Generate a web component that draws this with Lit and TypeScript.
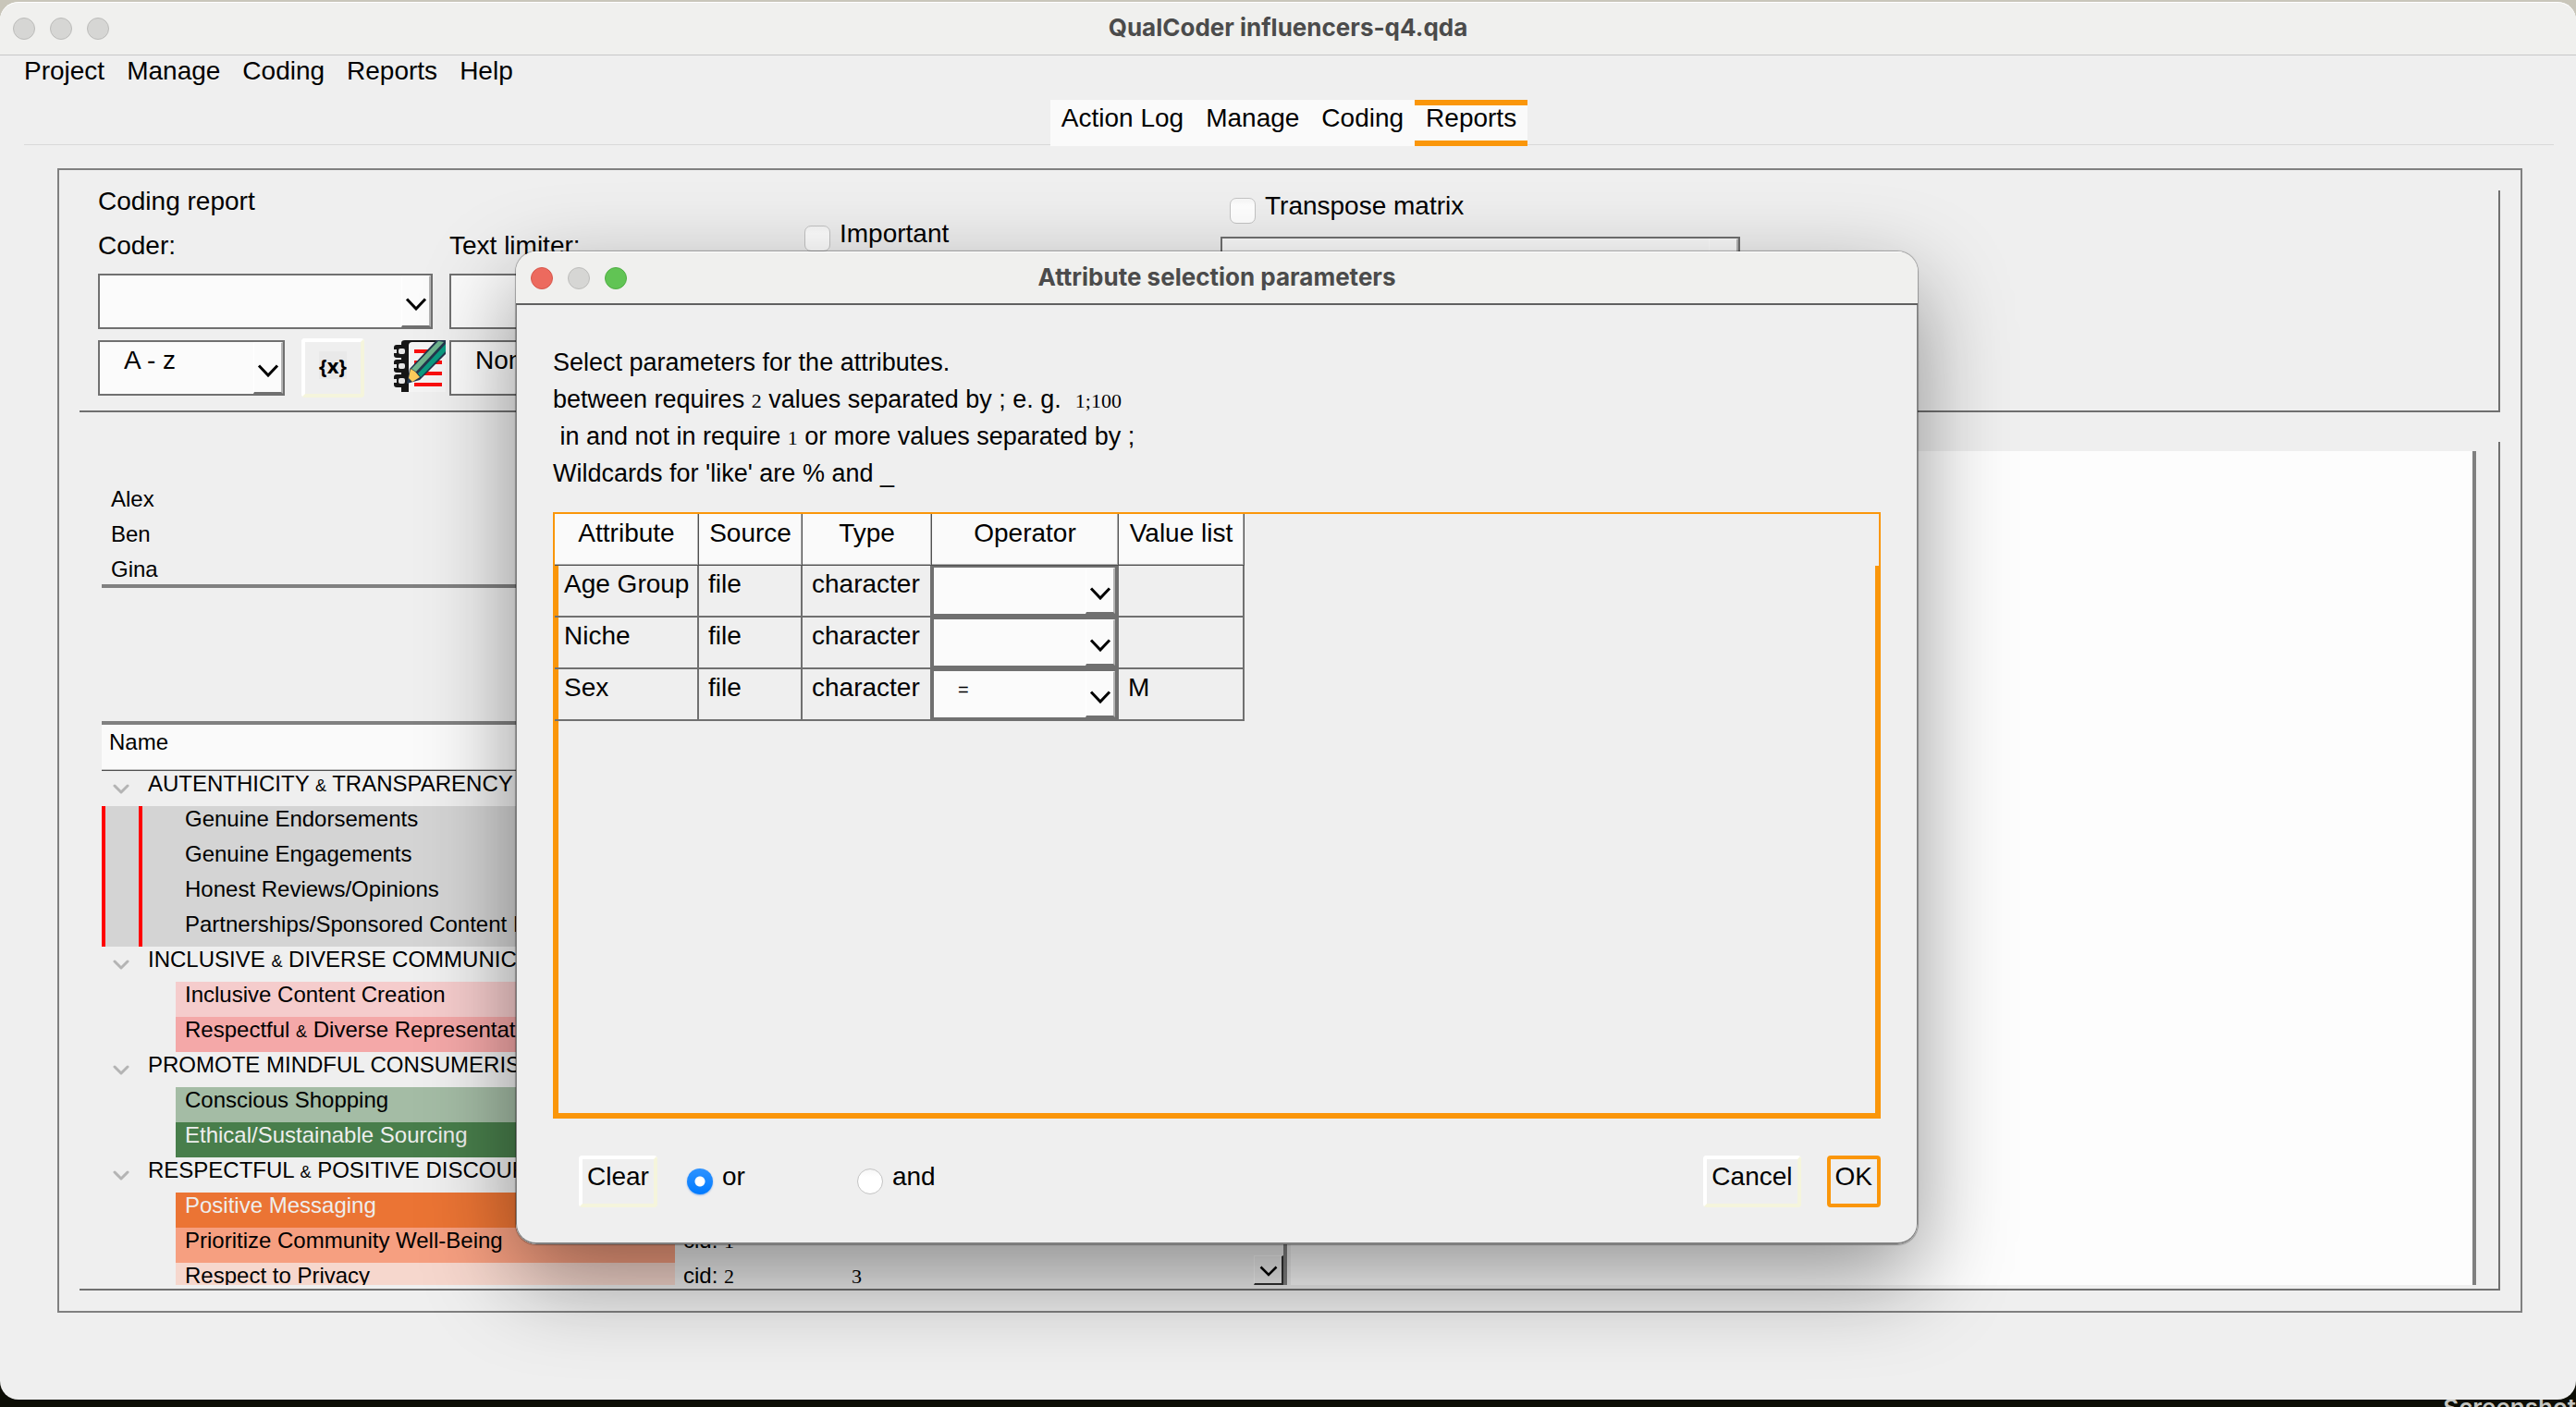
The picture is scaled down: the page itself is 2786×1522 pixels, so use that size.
import { LitElement, html, css, svg, nothing } from "lit";
import { customElement, property } from "lit/decorators.js";
import { classMap } from "lit/directives/class-map.js";

type Part = string | { n: string } | { s: string };

interface CodeRow {
  parts: Part[];
  kind: "category" | "code";
  tone?: string;
  id?: string;
  count?: string;
}

const codeRows: CodeRow[] = [
  { kind: "category", parts: ["AUTENTHICITY ", { s: "&" }, " TRANSPARENCY"] },
  { kind: "code", tone: "marked", parts: ["Genuine Endorsements"] },
  { kind: "code", tone: "marked", parts: ["Genuine Engagements"] },
  { kind: "code", tone: "marked", parts: ["Honest Reviews/Opinions"] },
  { kind: "code", tone: "marked", parts: ["Partnerships/Sponsored Content Disclosure"] },
  { kind: "category", parts: ["INCLUSIVE ", { s: "&" }, " DIVERSE COMMUNICATION"] },
  { kind: "code", tone: "pink-light", parts: ["Inclusive Content Creation"] },
  { kind: "code", tone: "pink", parts: ["Respectful ", { s: "&" }, " Diverse Representation"] },
  { kind: "category", parts: ["PROMOTE MINDFUL CONSUMERISM"] },
  { kind: "code", tone: "green-light", parts: ["Conscious Shopping"] },
  { kind: "code", tone: "green", parts: ["Ethical/Sustainable Sourcing"] },
  { kind: "category", parts: ["RESPECTFUL ", { s: "&" }, " POSITIVE DISCOURSE"] },
  { kind: "code", tone: "orange", parts: ["Positive Messaging"] },
  { kind: "code", tone: "orange-mid", parts: ["Prioritize Community Well-Being"], id: "1" },
  { kind: "code", tone: "orange-light", parts: ["Respect to Privacy"], id: "2", count: "3" },
];

const attributes = [
  { name: "Age Group", source: "file", type: "character", operator: "", value: "" },
  { name: "Niche", source: "file", type: "character", operator: "", value: "" },
  { name: "Sex", source: "file", type: "character", operator: "=", value: "M" },
];

const helpLines: Part[][] = [
  ["Select parameters for the attributes."],
  ["between requires ", { n: "2" }, " values separated by ; e. g.  ", { n: "1;100" }],
  [" in and not in require ", { n: "1" }, " or more values separated by ;"],
  ["Wildcards for 'like' are % and _"],
];

const renderParts = (parts: Part[]) =>
  parts.map((p) =>
    typeof p === "string"
      ? p
      : "n" in p
        ? html`<span class="num">${p.n}</span>`
        : html`<span class="amp">${p.s}</span>`
  );

const sharedText = css`
  *,
  *::before,
  *::after {
    box-sizing: border-box;
  }
  .num {
    font-family: "Liberation Serif", serif;
    font-size: 22px;
    line-height: 1;
  }
  .amp {
    font-size: 18px;
    line-height: 1;
  }
  input,
  button,
  select {
    font: inherit;
    color: inherit;
    margin: 0;
  }
`;

const titleStyles = css`
  h1 {
    margin: 0;
    padding-bottom: 2px;
    font: 700 26px/32px Inter, sans-serif;
    color: #4b4b4b;
  }
`;

const choiceStyles = css`
  .choice {
    display: flex;
    align-items: flex-start;
    gap: 10px;
    line-height: 32px;
  }
  .choice input {
    appearance: none;
    flex: none;
    width: 28px;
    height: 28px;
    margin-top: 7px;
    border: 1px solid #c4c4c4;
    border-radius: 7px;
    background: linear-gradient(#f6f6f6, #ffffff 30%);
  }
  .choice input[type="radio"] {
    border-radius: 50%;
  }
  .choice input[type="radio"]:checked {
    border: none;
    background: radial-gradient(circle, #ffffff 0 5px, transparent 6px), linear-gradient(#2e93ff, #007aff);
    box-shadow: 0 1px 2px rgba(0, 90, 220, 0.4);
  }
`;

@customElement("window-lights")
class WindowLights extends LitElement {
  @property({ type: Boolean }) active = false;

  static styles = css`
    :host {
      display: flex;
      gap: 16px;
    }
    .light {
      box-sizing: border-box;
      width: 24px;
      height: 24px;
      border-radius: 50%;
      border: 1px solid #bcbcba;
      background: #d6d6d4;
    }
    .close {
      background: #ec6a5e;
      border-color: #d6574c;
    }
    .zoom {
      background: #61c454;
      border-color: #50ad44;
    }
  `;

  render() {
    return html`
      <span class=${classMap({ light: true, close: this.active })}></span>
      <span class="light"></span>
      <span class=${classMap({ light: true, zoom: this.active })}></span>
    `;
  }
}

@customElement("combo-box")
class ComboBox extends LitElement {
  @property() label = "";
  @property() value = "";
  @property({ type: Boolean }) small = false;

  static styles = [
    sharedText,
    css`
      :host {
        display: block;
        height: 60px;
      }
      .combo {
        display: grid;
        grid-template-columns: 1fr 34px;
        height: 100%;
      }
      select {
        grid-area: 1 / 1 / 2 / 3;
        appearance: none;
        width: 100%;
        height: 100%;
        padding: 4px 34px 20px 26px;
        border: 2px solid #707070;
        border-radius: 0;
        background: #fbfbfb;
        line-height: 32px;
      }
      .small select {
        font-size: 20px;
        padding: 0 34px 10px 26px;
      }
      .arrow {
        grid-area: 1 / 2;
        pointer-events: none;
        margin: 2px 2px 2px 0;
        border-top: 1px solid #ffffff;
        border-left: 1px solid #ffffff;
        border-right: 2px solid #b4b4b4;
        border-bottom: 2px solid #707070;
        display: flex;
        align-items: center;
        justify-content: center;
        padding-top: 6px;
      }
      .arrow svg {
        width: 24px;
        height: 14px;
        flex: none;
      }
    `,
  ];

  render() {
    return html`
      <div class=${classMap({ combo: true, small: this.small })}>
        <select aria-label=${this.label}>
          <option>${this.value}</option>
        </select>
        <span class="arrow">
          <svg viewBox="0 0 24 14">
            <path d="M2 1.5 L12 12 L22 1.5" fill="none" stroke="#000" stroke-width="3" />
          </svg>
        </span>
      </div>
    `;
  }
}

@customElement("attribute-dialog")
class AttributeDialog extends LitElement {
  static styles = [
    sharedText,
    titleStyles,
    choiceStyles,
    css`
      :host {
        display: block;
        border-radius: 22px;
        background: #efefef;
        box-shadow: 0 0 1px 1px rgba(0, 0, 0, 0.3), 0 36px 100px rgba(0, 0, 0, 0.42);
        font-size: 28px;
        overflow: hidden;
      }
      .titlebar {
        display: grid;
        grid-template-columns: 1fr auto 1fr;
        align-items: center;
        height: 58px;
        padding: 0 16px;
        background: #f0f0ee;
        border-top: 1px solid #ffffff;
        border-bottom: 2px solid #606060;
      }
      .body {
        padding: 42px 39px 38px;
        border: 1px solid #808080;
        border-top: none;
        border-bottom: 2px solid #808080;
        border-radius: 0 0 22px 22px;
      }
      .help {
        margin-bottom: 22px;
        font-size: 27px;
        line-height: 40px;
      }
      .help p {
        margin: 0;
        height: 40px;
        white-space: pre;
      }
      .frame {
        position: relative;
        min-height: 656px;
        border: 2px solid #fa960a;
        border-bottom-width: 6px;
      }
      .frame::before,
      .frame::after {
        content: "";
        position: absolute;
        top: 56px;
        bottom: 0;
        width: 4px;
        background: #fa960a;
      }
      .frame::before {
        left: 0;
      }
      .frame::after {
        right: 0;
      }
      table {
        position: relative;
        z-index: 1;
        table-layout: fixed;
        width: 746px;
        border-collapse: separate;
        border-spacing: 0;
      }
      .c-attr {
        width: 156px;
      }
      .c-source {
        width: 112px;
      }
      .c-type {
        width: 140px;
      }
      .c-op {
        width: 202px;
      }
      .c-value {
        width: 136px;
      }
      th,
      td {
        height: 56px;
        vertical-align: top;
        line-height: 32px;
        font-weight: 400;
      }
      th {
        padding: 5px 0 0;
        text-align: center;
        background: #fafafa;
        border-right: 1px solid #505050;
        border-bottom: 1px solid #505050;
        box-shadow: inset -1px -1px #b0b0b0;
      }
      td {
        padding: 4px 0 0 10px;
        border-right: 2px solid #707070;
        border-bottom: 2px solid #707070;
      }
      td.op {
        padding: 0;
      }
      td.op combo-box {
        height: 54px;
      }
      .actions {
        display: flex;
        align-items: flex-start;
        gap: 28px;
        margin: 40px 0 0 28px;
      }
      .choices {
        display: flex;
        flex: 1;
        gap: 0;
        margin: 7px 0 0 4px;
      }
      .choices .choice {
        flex: 0 0 184px;
      }
      button {
        height: 56px;
        padding: 3px 5px 13px;
        line-height: 32px;
        border: 4px solid;
        border-color: #ffffff #f5f5dc #f5f5dc #ffffff;
        border-radius: 4px;
        background: #efefef;
      }
      button.default {
        border-color: #fa960a;
      }
    `,
  ];

  render() {
    return html`
      <div class="titlebar">
        <window-lights active></window-lights>
        <h1>Attribute selection parameters</h1>
      </div>
      <div class="body">
        <div class="help">${helpLines.map((line) => html`<p>${renderParts(line)}</p>`)}</div>
        <div class="frame">
          <table>
            <colgroup>
              <col class="c-attr" /><col class="c-source" /><col class="c-type" /><col class="c-op" /><col
                class="c-value"
              />
            </colgroup>
            <thead>
              <tr>
                <th>Attribute</th>
                <th>Source</th>
                <th>Type</th>
                <th>Operator</th>
                <th>Value list</th>
              </tr>
            </thead>
            <tbody>
              ${attributes.map(
                (a) => html`<tr>
                  <td>${a.name}</td>
                  <td>${a.source}</td>
                  <td>${a.type}</td>
                  <td class="op"><combo-box small label="Operator" value=${a.operator}></combo-box></td>
                  <td>${a.value}</td>
                </tr>`
              )}
            </tbody>
          </table>
        </div>
        <div class="actions">
          <button type="button">Clear</button>
          <div class="choices">
            <label class="choice"><input type="radio" name="join" checked />or</label>
            <label class="choice"><input type="radio" name="join" />and</label>
          </div>
          <button type="button">Cancel</button>
          <button type="button" class="default">OK</button>
        </div>
      </div>
    `;
  }
}

const notebookIcon = svg`
  <rect x="14" y="0" width="42" height="56" fill="#f4f4f4" />
  <path d="M8 3 Q8 0 12 0 H50 L48 2 H20 Q16 2 16 6 V56 H8 Z" fill="#161616" />
  <g fill="#161616">
    <rect x="0" y="5" width="15" height="14" rx="3" />
    <rect x="0" y="21" width="15" height="14" rx="3" />
    <rect x="0" y="37" width="15" height="14" rx="3" />
  </g>
  <g fill="#e6e6e6">
    <rect x="5" y="9" width="7" height="6" rx="2" />
    <rect x="5" y="25" width="7" height="6" rx="2" />
    <rect x="5" y="41" width="7" height="6" rx="2" />
    <rect x="0" y="10" width="3" height="4" />
    <rect x="0" y="26" width="3" height="4" />
    <rect x="0" y="42" width="3" height="4" />
  </g>
  <g fill="#fa0f0f">
    <rect x="22" y="10" width="30" height="4" />
    <rect x="22" y="22" width="30" height="4" />
    <rect x="22" y="34" width="30" height="4" />
    <rect x="22" y="46" width="30" height="4" />
  </g>
  <path d="M46 0 L56 0 L56 15 L28 43 L14 47 L17 31 Z" fill="#23364d" />
  <path d="M48 1 L54 2 L24 34 L19 31 Z" fill="#6fb58e" />
  <path d="M56 4 V12 L29 40 L26 36 Z" fill="#0b9a80" />
  <path d="M18 31 L23 34 L28 40 L20 45 L16 41 Z" fill="#fbcb5b" />
`;

@customElement("app-root")
class AppRoot extends LitElement {
  static styles = [
    sharedText,
    titleStyles,
    choiceStyles,
    css`
      :host {
        box-sizing: border-box;
        display: flex;
        flex-direction: column;
        position: relative;
        height: 100vh;
        overflow: hidden;
        padding-top: 2px;
        background: linear-gradient(#c9c6ba 0 50%, #0c0d05 50%);
        font: 28px/32px "Liberation Sans", Arial, sans-serif;
        color: #000000;
      }
      .window {
        position: relative;
        flex: 1;
        min-height: 0;
        display: flex;
        flex-direction: column;
        border-radius: 20px;
        background: #efefef;
      }
      .titlebar {
        display: flex;
        align-items: center;
        justify-content: center;
        height: 58px;
        flex: none;
        position: relative;
        background: #f0f0ee;
        border-top: 1px solid #ffffff;
        border-bottom: 1px solid #c8c8c8;
        border-radius: 20px 20px 0 0;
      }
      .titlebar window-lights {
        position: absolute;
        left: 14px;
      }
      .menu {
        display: flex;
        gap: 24px;
        padding: 1px 26px 0;
        height: 48px;
        flex: none;
      }
      .menu button,
      .tabs button {
        border: none;
        padding: 0;
        background: none;
        line-height: 32px;
        align-self: flex-start;
      }
      .tabs {
        display: flex;
        justify-content: center;
        margin: 0 24px 0 26px;
        height: 50px;
        flex: none;
        background: linear-gradient(#d9d9d9, #d9d9d9) 0 48px / 100% 1px no-repeat;
      }
      .tabs button {
        height: 50px;
        padding: 4px 12px 14px;
        background: #fafafa;
      }
      .tabs .current {
        padding: 0 12px 10px;
        line-height: 28px;
        border-top: 6px solid #fa960a;
        border-bottom: 6px solid #fa960a;
      }
      .report {
        flex: 1;
        min-height: 0;
        display: flex;
        flex-direction: column;
        gap: 32px;
        margin: 24px 58px 94px 62px;
        padding: 22px;
        border: 2px solid #808080;
      }
      .filters {
        flex: none;
        display: grid;
        grid-template-columns: 362px 366px 432px 562px;
        column-gap: 18px;
        height: 240px;
        padding-left: 20px;
        border: 0 solid #707070;
        border-width: 0 2px 2px 0;
      }
      .column {
        display: flex;
        flex-direction: column;
      }
      h2 {
        margin: -4px 0 16px;
        height: 32px;
        font: inherit;
      }
      .label {
        margin-bottom: 14px;
      }
      .limits .label {
        margin-top: 44px;
      }
      .column combo-box {
        margin-bottom: 12px;
      }
      .tools {
        display: flex;
        gap: 18px;
      }
      .tools > * {
        flex: none;
      }
      .tools combo-box {
        width: 202px;
      }
      .vars {
        width: 68px;
        height: 64px;
        margin-top: -2px;
        padding: 0 0 6px;
        border: 4px solid;
        border-color: #ffffff #f5f5dc #f5f5dc #ffffff;
        border-radius: 4px;
        background: #efefef;
        font: 700 22px/26px "Noto Sans", sans-serif;
      }
      .vars span {
        background: #e9e9e9;
      }
      .memo {
        width: 56px;
        height: 56px;
        margin-left: 14px;
        padding: 0;
        border: none;
        background: none;
      }
      .memo svg {
        display: block;
        width: 56px;
        height: 56px;
      }
      .flags {
        padding-top: 31px;
      }
      .matrix {
        padding-top: 1px;
      }
      .matrix .choice {
        padding-left: 10px;
        margin-bottom: 14px;
      }
      .results {
        flex: 1;
        min-height: 0;
        display: grid;
        grid-template-columns: minmax(0, 1fr) minmax(0, 1fr);
        grid-template-rows: minmax(0, 1fr);
        gap: 4px;
        padding: 0 24px 4px;
        border: 0 solid #707070;
        border-width: 0 2px 2px 0;
      }
      .left {
        display: flex;
        flex-direction: column;
        min-height: 0;
        gap: 144px;
        font-size: 24px;
        line-height: 28px;
      }
      .coders {
        flex: none;
        height: 158px;
        margin: 0;
        padding: 48px 10px 0;
        list-style: none;
        overflow: hidden;
        border-bottom: 4px solid #808080;
      }
      .coders li {
        height: 38px;
      }
      .tree {
        flex: 1;
        min-height: 0;
        position: relative;
        overflow: hidden;
        border: 0 solid #808080;
        border-width: 4px 4px 0 0;
      }
      .tree table {
        table-layout: fixed;
        width: 100%;
        border-collapse: separate;
        border-spacing: 0;
      }
      .c-name {
        width: 620px;
      }
      .c-id {
        width: 182px;
      }
      .tree th {
        height: 50px;
        padding: 5px 8px 0;
        vertical-align: top;
        text-align: left;
        font-weight: 400;
        background: #fafafa;
        border-bottom: 1px solid #505050;
        box-shadow: inset 0 -1px #c0c0c0;
      }
      .tree td {
        height: 38px;
        padding: 0 9px;
        vertical-align: top;
        white-space: nowrap;
      }
      .tree td.name {
        padding: 0;
      }
      .entry {
        display: flex;
        height: 38px;
      }
      .twist {
        width: 50px;
        flex: none;
        padding: 14px 0 0 12px;
      }
      .twist svg {
        display: block;
        width: 18px;
        height: 12px;
      }
      .swatch {
        flex: 1;
        margin-left: 80px;
        padding-left: 10px;
      }
      .marked .entry {
        background: linear-gradient(90deg, #ff0000 0 4px, #d4d4d4 4px 40px, #ff0000 40px 44px, #d4d4d4 44px);
      }
      .pink-light .swatch {
        background: #f5cccc;
      }
      .pink .swatch {
        background: #f4a8a8;
      }
      .green-light .swatch {
        background: #a4bca5;
      }
      .green .swatch {
        background: #487e4b;
        color: #eeeeee;
      }
      .orange .swatch {
        background: #eb7434;
        color: #eeeeee;
      }
      .orange-mid .swatch {
        background: #f69f80;
      }
      .orange-light .swatch {
        background: #f6d7cd;
      }
      .scroll {
        position: absolute;
        right: 0;
        bottom: 0;
        width: 32px;
        height: 32px;
        padding: 2px 0 0;
        border: 1px solid #fafafa;
        border-right: 2px solid #303030;
        border-bottom: 2px solid #303030;
        background: #efefef;
      }
      .scroll svg {
        display: block;
        margin: 0 auto;
        width: 20px;
        height: 12px;
      }
      .output {
        margin-top: 10px;
        background: #fdfdfd;
        border-right: 4px solid #808080;
      }
      attribute-dialog {
        position: absolute;
        top: 270px;
        left: 558px;
        right: 712px;
      }
      .desktop {
        flex: none;
        display: flex;
        justify-content: flex-end;
        height: 8px;
        overflow: hidden;
        font: 600 26px/26px Inter, sans-serif;
        color: #c4c4c0;
      }
      .desktop span {
        margin-top: -4px;
      }
    `,
  ];

  private renderRow(r: CodeRow) {
    return html`<tr class=${r.tone ?? "plain"}>
      <td class="name">
        <div class="entry">
          ${r.kind === "category"
            ? html`<span class="twist"
                  ><svg viewBox="0 0 18 12">
                    <path
                      d="M2 2 L9 9 L16 2"
                      fill="none"
                      stroke="#b4b4b4"
                      stroke-width="3"
                      stroke-linecap="round"
                      stroke-linejoin="round"
                    /></svg></span
                ><span>${renderParts(r.parts)}</span>`
            : html`<span class="swatch">${renderParts(r.parts)}</span>`}
        </div>
      </td>
      <td>${r.id ? html`cid: <span class="num">${r.id}</span>` : nothing}</td>
      <td>${r.count ? html`<span class="num">${r.count}</span>` : nothing}</td>
    </tr>`;
  }

  render() {
    return html`
      <main class="window">
        <header class="titlebar">
          <window-lights></window-lights>
          <h1>QualCoder influencers-q4.qda</h1>
        </header>
        <nav class="menu">
          ${["Project", "Manage", "Coding", "Reports", "Help"].map(
            (m) => html`<button type="button">${m}</button>`
          )}
        </nav>
        <nav class="tabs">
          ${["Action Log", "Manage", "Coding", "Reports"].map(
            (t) => html`<button type="button" class=${classMap({ current: t === "Reports" })}>${t}</button>`
          )}
        </nav>
        <section class="report">
          <div class="filters">
            <div class="column">
              <h2>Coding report</h2>
              <span class="label">Coder:</span>
              <combo-box label="Coder"></combo-box>
              <div class="tools">
                <combo-box label="Sort order" value="A - z"></combo-box>
                <button type="button" class="vars"><span>{x}</span></button>
                <button type="button" class="memo" aria-label="Memo">
                  <svg viewBox="0 0 56 56">${notebookIcon}</svg>
                </button>
              </div>
            </div>
            <div class="column limits">
              <span class="label">Text limiter:</span>
              <combo-box label="Text limiter"></combo-box>
              <combo-box label="Memo choice" value="None"></combo-box>
            </div>
            <div class="column flags">
              <label class="choice"><input type="checkbox" />Important</label>
            </div>
            <div class="column matrix">
              <label class="choice"><input type="checkbox" />Transpose matrix</label>
              <combo-box label="Matrix type"></combo-box>
            </div>
          </div>
          <div class="results">
            <div class="left">
              <ul class="coders">
                <li>Alex</li>
                <li>Ben</li>
                <li>Gina</li>
              </ul>
              <div class="tree">
                <table>
                  <colgroup>
                    <col class="c-name" /><col class="c-id" /><col />
                  </colgroup>
                  <thead>
                    <tr>
                      <th>Name</th>
                      <th></th>
                      <th></th>
                    </tr>
                  </thead>
                  <tbody>
                    ${codeRows.map((r) => this.renderRow(r))}
                  </tbody>
                </table>
                <button type="button" class="scroll" aria-label="Scroll down">
                  <svg viewBox="0 0 20 12">
                    <path d="M1.5 1.5 L10 10 L18.5 1.5" fill="none" stroke="#000" stroke-width="2.5" />
                  </svg>
                </button>
              </div>
            </div>
            <div class="output"></div>
          </div>
        </section>
        <attribute-dialog role="dialog"></attribute-dialog>
      </main>
      <footer class="desktop"><span>Screenshot</span></footer>
    `;
  }
}
